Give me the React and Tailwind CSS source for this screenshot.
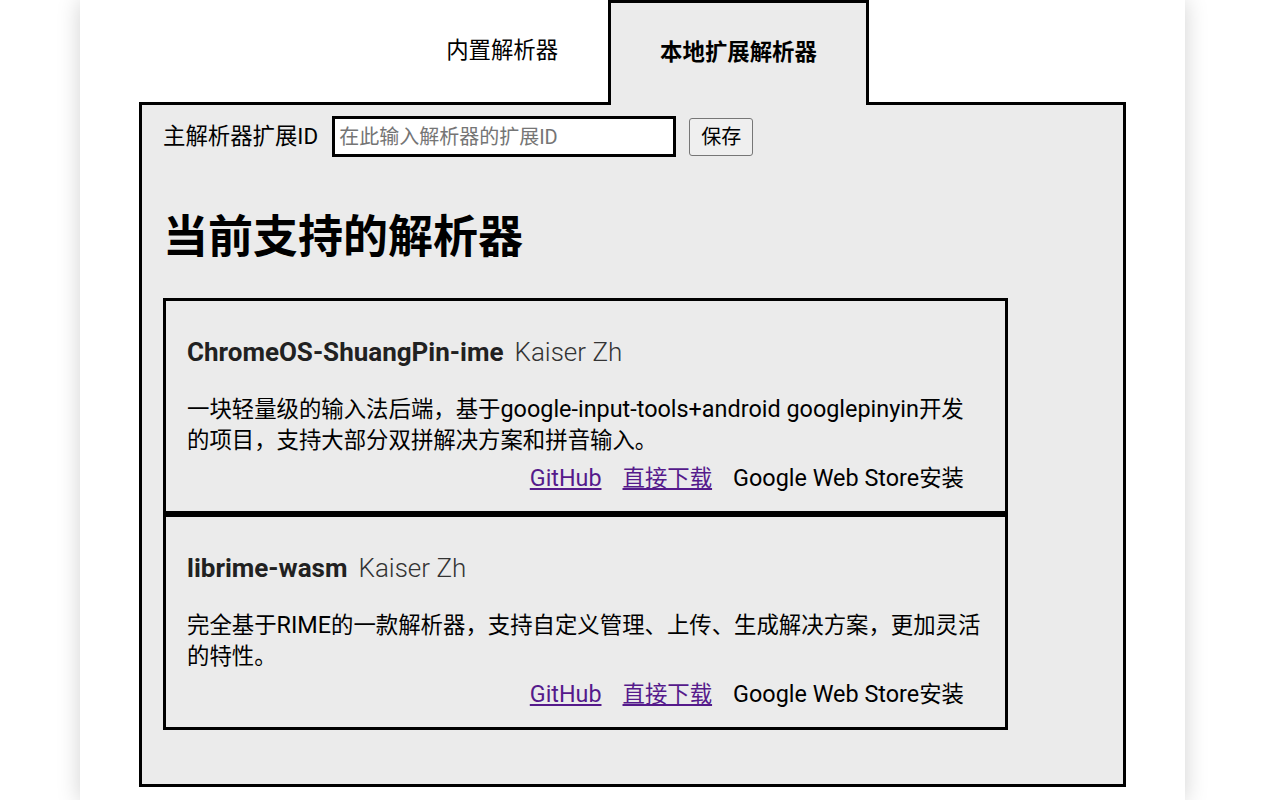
import React from "react";

const parsers = [
  {
    name: "ChromeOS-ShuangPin-ime",
    author: "Kaiser Zh",
    desc: "一块轻量级的输入法后端，基于google-input-tools+android googlepinyin开发的项目，支持大部分双拼解决方案和拼音输入。",
  },
  {
    name: "librime-wasm",
    author: "Kaiser Zh",
    desc: "完全基于RIME的一款解析器，支持自定义管理、上传、生成解决方案，更加灵活的特性。",
  },
];

// latin runs render a bit wider than the CJK ones
function Mixed({ text }) {
  return text.split(/([A-Za-z0-9+\-. ]+)/).map((part, i) =>
    /^[A-Za-z0-9+\-. ]+$/.test(part) ? (
      <span key={i} className="text-[23.4px]">{part}</span>
    ) : (
      part
    )
  );
}

function ParserCard({ parser }) {
  return (
    <div className="w-[845px] border-[3px] border-black pl-[21px] pr-[22px] pt-[33px] pb-[17px]">
      <div className="flex items-baseline gap-[11px] h-[36px] leading-[36px] text-[26px]">
        <span className="font-bold text-[#212121]">{parser.name}</span>
        <span className="font-light text-[#333]">{parser.author}</span>
      </div>
      <p className="mt-[24px] leading-[31px]">
        <Mixed text={parser.desc} />
      </p>
      <div className="flex justify-end gap-[21px] mt-[7px] mr-[19px] leading-[31px]">
        <a href="#" className="text-[#551a8b] underline text-[23.3px]">GitHub</a>
        <a href="#" className="text-[#551a8b] underline">直接下载</a>
        <span>
          <Mixed text="Google Web Store安装" />
        </span>
      </div>
    </div>
  );
}

export default function App() {
  return (
    <div className="min-h-screen bg-white font-['Roboto','Noto_Sans_CJK_SC',sans-serif] text-[22.4px] text-black">
      <div className="ml-[80px] w-[1105px] min-h-screen bg-white shadow-[0_0_22px_rgba(0,0,0,0.18)] pb-[15px]">
        <div className="flex justify-center">
          <div className="px-[50px] h-[102px] flex items-center">内置解析器</div>
          <div className="relative z-10 -mb-[3px] px-[49px] h-[105px] pb-[3px] flex items-center font-bold bg-[#ebebeb] border-[3px] border-b-0 border-black">
            本地扩展解析器
          </div>
        </div>
        <div className="mx-[59px] bg-[#ebebeb] border-[3px] border-black pl-[21px] pt-[11px] pb-[54px]">
          <div className="flex items-center">
            <label>主解析器扩展ID</label>
            <input
              className="ml-[14px] w-[344px] h-[41px] bg-white border-[3px] border-black px-[4px] text-[20px] placeholder:text-[#757575] outline-none"
              placeholder="在此输入解析器的扩展ID"
            />
            <button className="ml-[13px] w-[64px] h-[38px] text-[20px] bg-[#efefef] border border-[#767676] rounded-[3px]">
              保存
            </button>
          </div>
          <h1 className="mt-[55px] mb-[34px] text-[45px] font-bold leading-[52px]">当前支持的解析器</h1>
          <div className="flex flex-col">
            {parsers.map((p) => (
              <ParserCard key={p.name} parser={p} />
            ))}
          </div>
        </div>
      </div>
    </div>
  );
}
